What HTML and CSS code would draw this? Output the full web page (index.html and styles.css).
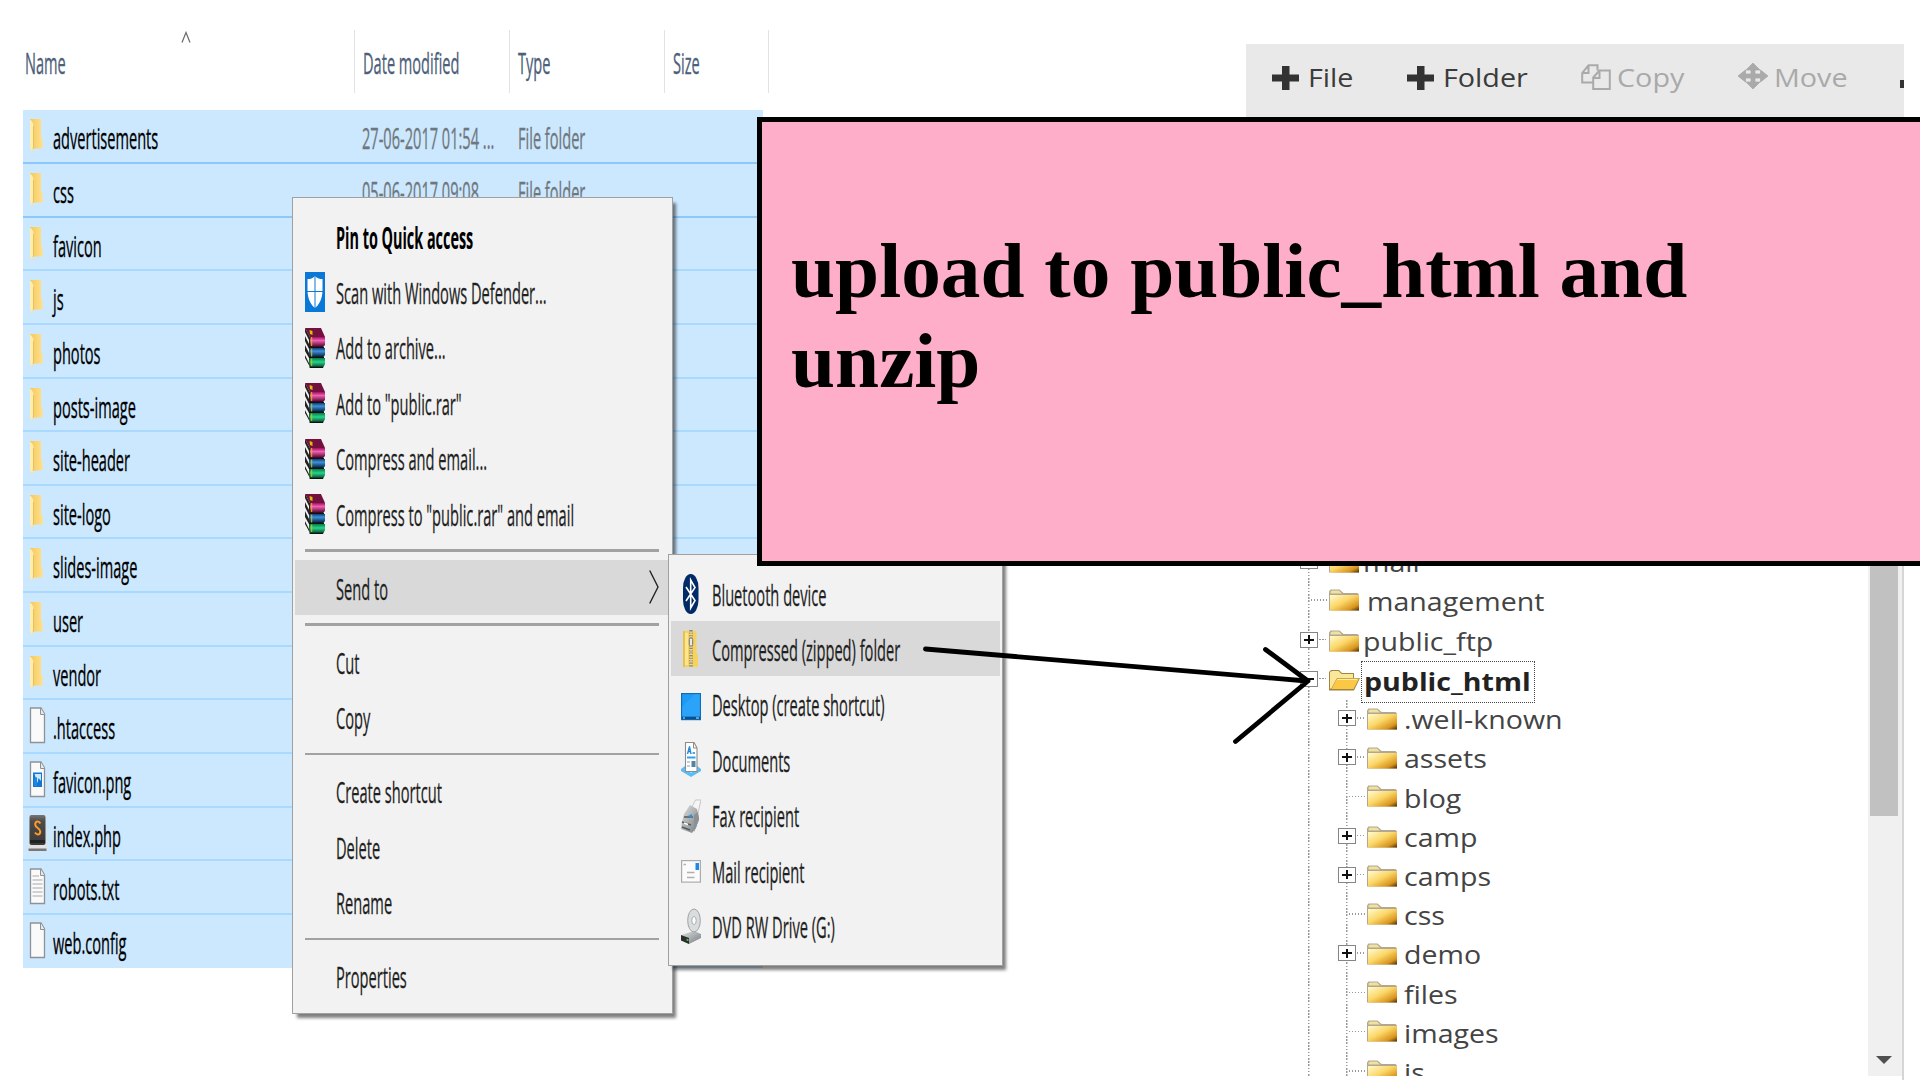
FILE: index.html
```html
<!DOCTYPE html>
<html lang="en">
<head>
<meta charset="utf-8">
<title>Upload to public_html</title>
<link rel="stylesheet" href="styles.css">
</head>
<body>
<svg class="defs" width="0" height="0" aria-hidden="true">
  <defs>
    <linearGradient id="gFold" x1="0" y1="0" x2="1" y2="0"><stop offset="0" stop-color="#f3c95f"/><stop offset="1" stop-color="#ffe08a"/></linearGradient>
    <linearGradient id="gTree" x1="0" y1="0" x2="1" y2="1"><stop offset="0" stop-color="#fffbd0"/><stop offset=".45" stop-color="#fbd768"/><stop offset=".8" stop-color="#d9941c"/><stop offset="1" stop-color="#4a2c00"/></linearGradient>
    <linearGradient id="gRed" x1="0" y1="0" x2="0" y2="1"><stop offset="0" stop-color="#a0105f"/><stop offset=".35" stop-color="#f05fb4"/><stop offset="1" stop-color="#4a0022"/></linearGradient>
    <linearGradient id="gBlue" x1="0" y1="0" x2="0" y2="1"><stop offset="0" stop-color="#0d3f78"/><stop offset=".35" stop-color="#3c92dc"/><stop offset="1" stop-color="#031c38"/></linearGradient>
    <linearGradient id="gGreen" x1="0" y1="0" x2="0" y2="1"><stop offset="0" stop-color="#067a46"/><stop offset=".4" stop-color="#25d68c"/><stop offset="1" stop-color="#02321c"/></linearGradient>
    <linearGradient id="gKey" x1="0" y1="0" x2="0" y2="1"><stop offset="0" stop-color="#777"/><stop offset=".2" stop-color="#4c4c4c"/><stop offset="1" stop-color="#3a3a3a"/></linearGradient>
    <linearGradient id="gMetal" x1="0" y1="0" x2="1" y2="1"><stop offset="0" stop-color="#dfe2e4"/><stop offset="1" stop-color="#767c80"/></linearGradient>
  </defs>
  <symbol id="folder" viewBox="0 0 20 40">
    <path d="M2 3H13V22L14.500 23V32.500H5V36L2 32Z" fill="url(#gFold)"/>
    <path d="M2 3.500C4 5 5.500 7 5.500 10V31L4.200 36L2 32Z" fill="#ffedb0"/>
    <path d="M5.500 10V31L5 33" fill="none" stroke="#e9b84a" stroke-width=".8"/>
  </symbol>
  <symbol id="page" viewBox="0 0 20 40">
    <path d="M2.500 2H13L16.500 8V36.500H2.500Z" fill="#fafafa" stroke="#8e9296" stroke-width="1.300"/>
    <path d="M12.500 2V8.500H16.500" fill="#e8e8e8" stroke="#8e9296"/>
  </symbol>
  <symbol id="image" viewBox="0 0 20 40">
    <use href="#page"/>
    <path d="M5 12.500H14V27H5Z" fill="#0f78d4"/><path d="M6.500 14H13V21L10.500 18L9.500 23Z" fill="#e6f3ff" opacity=".9"/><path d="M6 19L9 17V26H6Z" fill="#1b87e0"/>
  </symbol>
  <symbol id="text" viewBox="0 0 20 40">
    <use href="#page"/><path d="M4.500 9H11M4.500 13H14.500M4.500 17H14.500M4.500 21H14.500M4.500 25H14.500M4.500 29H14.500" stroke="#a8a8a8" stroke-width="1.200"/>
  </symbol>
  <symbol id="sublime" viewBox="0 0 20 40">
    <path d="M1 4L0 34Q0 37.500 1.500 37.500H17.500Q19 37.500 19 34L18 4Z" fill="#e2e2e2"/>
    <path d="M.5 34.500H18.500V37H.5Z" fill="#777"/>
    <rect x="1.500" y="1" width="16" height="30" rx="2" fill="url(#gKey)"/>
    <path d="M2 26H17V29H2Z" fill="#222"/>
    <path d="M12.300 9.500C11 6.500 7.200 7 7.200 10.500S12.300 14 12.300 17.500S9 21.500 7 18.500" fill="none" stroke="#ff9a28" stroke-width="2"/>
  </symbol>
  <symbol id="defender" viewBox="0 0 20 40">
    <rect width="20" height="40" fill="#0a78d7"/>
    <path d="M10 4C12 6.500 15 7 17.500 7V18C17.500 27 14 33 10 36C6 33 2.500 27 2.500 18V7C5 7 8 6.500 10 4Z" fill="#fff"/>
    <path d="M10 3V36M2 19.500H18" stroke="#0a78d7" stroke-width="1"/>
  </symbol>
  <symbol id="rar" viewBox="0 0 20 40">
    <path d="M0 0L5 9V39L0 30Z" fill="#222"/>
    <path d="M0 4L4 12V16L0 8ZM0 13L4 21V25L0 17ZM0 23L4 30V35L0 27Z" fill="#f4f4f4"/>
    <path d="M0 0H16L20 9H5Z" fill="#74103f"/>
    <path d="M4.500 2L7.500 3V7L5 6Z" fill="#d8c400"/>
    <path d="M5 9H20V17L18 19H5Z" fill="url(#gRed)"/>
    <path d="M4.500 20H20V27L18.500 29H4.500Z" fill="url(#gBlue)"/>
    <path d="M4.500 30H20V36L18 40H4.500Z" fill="url(#gGreen)"/>
    <path d="M4 19.300H19M4 29.300H19M5 39.300H18" stroke="#111" stroke-width="1.300"/>
    <path d="M6.700 9V18M6.700 20.500V28.500M6.700 30.500V38" stroke="#d8c400" stroke-width="1"/>
  </symbol>
  <symbol id="bluetooth" viewBox="0 0 20 40">
    <rect x="2" y="0" width="15.500" height="40" rx="7.700" ry="14" fill="#012a66"/>
    <path d="M5 13L14 26.500L9.700 34V6L14 13.500L5 27" fill="none" stroke="#fff" stroke-width="1.600"/>
  </symbol>
  <symbol id="zip" viewBox="0 0 20 40">
    <path d="M2 2H15.500V24L17 26V38H2Z" fill="#f6d25e"/><path d="M2 2H4V38H2Z" fill="#e8c04c"/><path d="M4 4H7V36H4Z" fill="#ffe58c"/>
    <path d="M10 1V38" stroke="#8c8570" stroke-width="3.400" stroke-dasharray="1.500 1"/>
    <path d="M10 3V37" stroke="#ddd9cb" stroke-width="1.300" stroke-dasharray="2 1.500"/>
    <rect x="8.300" y="9" width="3.400" height="8" rx="1.500" fill="#e8e8e8" stroke="#777"/>
  </symbol>
  <symbol id="desktop" viewBox="0 0 20 40">
    <rect x=".6" y="8.600" width="18.800" height="26" fill="#1e9cf4" stroke="#0f6db8" stroke-width="1.200"/>
    <path d="M1 22L14 9H19V31H1Z" fill="#35aafb" opacity=".5"/><path d="M1 33H19" stroke="#084f8b" stroke-width="2.500"/><path d="M2 33H4M15 33H18" stroke="#cfeaff" stroke-width="1.200"/>
  </symbol>
  <symbol id="documents" viewBox="0 0 20 40">
    <path d="M0 29L4 26H16L20 29V31L10 37L0 31Z" fill="#5bbdf2"/><path d="M3 29H17L10 33Z" fill="#a9e0fb"/>
    <path d="M4.500 2.500H13L16 8V31.500H4.500Z" fill="#fff" stroke="#8c8c8c" stroke-width="1.100"/><path d="M12.500 2.500V8H16" fill="none" stroke="#8c8c8c"/>
    <path d="M6.500 14L8.500 6.500L10 14M7 11.500H9.500M11.500 13H14" fill="none" stroke="#1d87d8" stroke-width="1.300"/>
    <path d="M6 17.500H14.500" stroke="#2aa0ee" stroke-width="2"/><path d="M6 22H9M6 26H9" stroke="#999" stroke-width="1.200"/><path d="M10.500 21H14.500V27H10.500Z" fill="#4d87a8"/>
  </symbol>
  <symbol id="fax" viewBox="0 0 20 40">
    <path d="M11 11L14.500 4H20L17 17Z" fill="#f5f5f5" stroke="#bbb" stroke-width=".8"/>
    <path d="M3 18L9 9L16 13L18 22L15 32L11 37L0 33L1 26Z" fill="url(#gMetal)"/>
    <path d="M13 19L17 16L18 24L13 36Z" fill="#8a9094"/>
    <path d="M3 21H12M1 26L10 29M1 31L9 34" stroke="#555b5f" stroke-width="1.700"/><path d="M7 20L11 18V22Z" fill="#2c93e0"/><path d="M3 27L7 28.500" stroke="#fff" stroke-width="1.500"/>
  </symbol>
  <symbol id="mail" viewBox="0 0 20 40">
    <rect x=".6" y="9.600" width="18.800" height="21.500" fill="#fbfbfb" stroke="#a8acb0" stroke-width="1.200"/>
    <path d="M14.500 12H18V19H14.500Z" fill="#1e88e5"/><path d="M2.500 13.500H5M6 21.500H13.500M6 26.500H13.500" stroke="#b0b0b0" stroke-width="1.500"/>
  </symbol>
  <symbol id="dvd" viewBox="0 0 20 40">
    <path d="M0 29L13 25L20 28V32L8 38L0 34Z" fill="url(#gMetal)"/><path d="M0 29L8 32V38L0 34.500Z" fill="#2d2d2d"/><path d="M5.500 33.500L7.500 34.300" stroke="#3bd13b" stroke-width="1.800"/>
    <ellipse cx="13" cy="14.500" rx="6.300" ry="11.500" fill="#dadddd" stroke="#9fa3a5"/><ellipse cx="13" cy="14.500" rx="2.200" ry="4" fill="#fff" stroke="#aaa"/>
  </symbol>
  <symbol id="tfolder" viewBox="0 0 32 22">
    <path d="M1 6V2.500L2.500 .5H11.500L15.500 4H29.500L31 5.500V21.500H1Z" fill="#b3a88f"/>
    <path d="M2.500 2.500L4 1.500H11L14 4.500H2.500Z" fill="#efe2a0"/>
    <rect x="2" y="6" width="29" height="15.500" fill="url(#gTree)"/>
  </symbol>
  <symbol id="topen" viewBox="0 0 32 22">
    <path d="M1 21V3L3 1H11L14 4H26V9H32L26 21.500H1Z" fill="#a08440"/>
    <path d="M2 19V3L4 2H10.500L13.500 5H25V9H9L3 20Z" fill="#fae79a"/>
    <path d="M9 9.500H31L25.500 20H3.500Z" fill="#fbc846"/><path d="M9.500 10.500H29" stroke="#fff0a8"/>
  </symbol>
  <symbol id="plus" viewBox="0 0 27 24"><path d="M10 0H17.500V8.500H27V15.500H17.500V24H10V15.500H0V8.500H10Z" fill="#333"/></symbol>
</svg>

<main class="screen">
  <section class="explorer">
    <header class="cols">
      <div class="col name"><span class="tight">Name</span><svg class="sort" viewBox="0 0 10 12"><path d="M1 11.500L5 1.500L9 11.500" fill="none" stroke="#6a6a6a" stroke-width="1.200"/></svg></div>
      <div class="col"><span class="tight">Date modified</span></div>
      <div class="col"><span class="tight">Type</span></div>
      <div class="col size"><span class="tight">Size</span></div>
    </header>
    <ul class="files">
      <li class="strong"><svg><use href="#folder"/></svg><span class="tight fname">advertisements</span><span class="tight date">27-06-2017 01:54 ...</span><span class="tight kind">File folder</span></li>
      <li class="strong"><svg><use href="#folder"/></svg><span class="tight fname">css</span><span class="tight date">05-06-2017 09:08</span><span class="tight kind">File folder</span></li>
      <li><svg><use href="#folder"/></svg><span class="tight">favicon</span></li>
      <li><svg><use href="#folder"/></svg><span class="tight">js</span></li>
      <li><svg><use href="#folder"/></svg><span class="tight">photos</span></li>
      <li><svg><use href="#folder"/></svg><span class="tight">posts-image</span></li>
      <li><svg><use href="#folder"/></svg><span class="tight">site-header</span></li>
      <li><svg><use href="#folder"/></svg><span class="tight">site-logo</span></li>
      <li><svg><use href="#folder"/></svg><span class="tight">slides-image</span></li>
      <li><svg><use href="#folder"/></svg><span class="tight">user</span></li>
      <li><svg><use href="#folder"/></svg><span class="tight">vendor</span></li>
      <li><svg><use href="#page"/></svg><span class="tight">.htaccess</span></li>
      <li><svg><use href="#image"/></svg><span class="tight">favicon.png</span></li>
      <li><svg><use href="#sublime"/></svg><span class="tight">index.php</span></li>
      <li><svg><use href="#text"/></svg><span class="tight">robots.txt</span></li>
      <li><svg><use href="#page"/></svg><span class="tight">web.config</span></li>
    </ul>
  </section>

  <section class="manager">
    <nav class="toolbar">
      <span class="tool file"><svg class="pl"><use href="#plus"/></svg><b>File</b></span>
      <span class="tool fold"><svg class="pl"><use href="#plus"/></svg><b>Folder</b></span>
      <span class="tool copy off"><svg class="cp" viewBox="0 0 30 26"><path d="M12 18.500H1.200V9L7.500 1.200H16.500V6.500M7.500 1.200V9H1.200M12.200 25V13.500L18.500 6.500H28.800V25ZM18.500 6.500V14H12.200" fill="none" stroke="#aaa" stroke-width="2"/></svg><b>Copy</b></span>
      <span class="tool move off"><svg class="mv" viewBox="0 0 30 26"><path d="M15 0L22 7H17V11H22.500V7L30 13L22.500 19V15H17V19H22L15 26L8 19H13V15H7.500V19L0 13L7.500 7V11H13V7H8Z" fill="#aaa" stroke="#aaa" stroke-width=".8"/></svg><b>Move</b></span>
      <i class="cut"></i>
    </nav>
    <div class="pane">
      <ul class="tree">
        <li><i class="box"></i><svg><use href="#tfolder"/></svg><span>mail</span></li>
        <li class="leaf"><svg><use href="#tfolder"/></svg><span>management</span></li>
        <li><i class="box"></i><svg><use href="#tfolder"/></svg><span>public_ftp</span></li>
        <li><i class="box minus"></i><svg><use href="#topen"/></svg><strong class="focus"><span>public_html</span></strong></li>
        <li class="branch">
          <ul>
            <li><i class="box"></i><svg><use href="#tfolder"/></svg><span>.well-known</span></li>
            <li><i class="box"></i><svg><use href="#tfolder"/></svg><span>assets</span></li>
            <li class="leaf"><svg><use href="#tfolder"/></svg><span>blog</span></li>
            <li><i class="box"></i><svg><use href="#tfolder"/></svg><span>camp</span></li>
            <li><i class="box"></i><svg><use href="#tfolder"/></svg><span>camps</span></li>
            <li class="leaf"><svg><use href="#tfolder"/></svg><span>css</span></li>
            <li><i class="box"></i><svg><use href="#tfolder"/></svg><span>demo</span></li>
            <li class="leaf"><svg><use href="#tfolder"/></svg><span>files</span></li>
            <li class="leaf"><svg><use href="#tfolder"/></svg><span>images</span></li>
            <li class="leaf"><svg><use href="#tfolder"/></svg><span>js</span></li>
          </ul>
        </li>
      </ul>
      <div class="scroll"><div class="thumb"></div><svg class="down" viewBox="0 0 16 8"><path d="M0 0H16L8 8Z" fill="#505050"/></svg></div>
    </div>
  </section>

  <div class="menu main">
    <div class="item bold"><span>Pin to Quick access</span></div>
    <div class="item"><svg><use href="#defender"/></svg><span>Scan with Windows Defender...</span></div>
    <div class="item"><svg><use href="#rar"/></svg><span>Add to archive...</span></div>
    <div class="item"><svg><use href="#rar"/></svg><span>Add to "public.rar"</span></div>
    <div class="item"><svg><use href="#rar"/></svg><span>Compress and email...</span></div>
    <div class="item"><svg><use href="#rar"/></svg><span>Compress to "public.rar" and email</span></div>
    <hr>
    <div class="item hover"><span>Send to</span><svg class="chev" viewBox="0 0 10 34"><path d="M.7 .5L9 17L.7 33.500" fill="none" stroke="#222" stroke-width="1.400"/></svg></div>
    <hr>
    <div class="item"><span>Cut</span></div>
    <div class="item"><span>Copy</span></div>
    <hr>
    <div class="item"><span>Create shortcut</span></div>
    <div class="item"><span>Delete</span></div>
    <div class="item"><span>Rename</span></div>
    <hr>
    <div class="item"><span>Properties</span></div>
  </div>

  <div class="menu sub">
    <div class="item"><svg><use href="#bluetooth"/></svg><span>Bluetooth device</span></div>
    <div class="item hover"><svg><use href="#zip"/></svg><span>Compressed (zipped) folder</span></div>
    <div class="item"><svg><use href="#desktop"/></svg><span>Desktop (create shortcut)</span></div>
    <div class="item"><svg><use href="#documents"/></svg><span>Documents</span></div>
    <div class="item"><svg><use href="#fax"/></svg><span>Fax recipient</span></div>
    <div class="item"><svg><use href="#mail"/></svg><span>Mail recipient</span></div>
    <div class="item"><svg><use href="#dvd"/></svg><span>DVD RW Drive (G:)</span></div>
  </div>

  <div class="note"><p>upload to public_html and<br>unzip</p></div>

  <svg class="arrow" viewBox="0 0 1920 1080"><path d="M925.500 649L1307 681M1265.500 649.500L1308 681L1235.500 741.500" fill="none" stroke="#000" stroke-width="4.800" stroke-linecap="round" stroke-linejoin="round"/></svg>
</main>
</body>
</html>
```
FILE: styles.css
```css
* { box-sizing: border-box; }
body { margin: 0; background: #fff; font-family: "Open Sans", "Noto Sans", sans-serif; }
ul { list-style: none; margin: 0; padding: 0; }
.defs { position: absolute; }
.screen { position: relative; display: flex; justify-content: space-between; width: 1920px; height: 1080px; overflow: hidden; }

/* file explorer */
.explorer { width: 769px; padding-top: 30px; font-size: 30px; }
.tight { display: block; white-space: nowrap; transform: scaleX(.486); transform-origin: 0 50%; -webkit-text-stroke: .35px currentColor; }
.cols { display: flex; height: 63px; padding-left: 25px; color: #4c607a; line-height: 66px; }
.col { display: flex; width: 155px; padding-left: 7.500px; border-left: 1px solid #e2e2e2; }
.col .tight { width: 90px; }
.col.name { position: relative; width: 329px; padding-left: 0; border: 0; }
.col.size { width: 105px; border-right: 1px solid #e2e2e2; }
.sort { position: absolute; left: 156px; top: 1px; width: 10px; height: 12px; }
.files { width: 740px; margin: 17.400px 0 0 23px; color: #000; }
.files li { display: flex; height: 53.630px; line-height: 55px; padding-left: 5px; background: #cce8ff; border-bottom: 2px solid #a9d9ff; }
.files li.strong { border-bottom-color: #8cc8fc; }
.files li:last-child { border: 0; }
.files svg { flex: none; width: 20px; height: 40px; margin: 6px 5px 0 0; }
.files .fname { width: 309px; }
.files .date { width: 155.500px; }
.date, .kind { color: #6f777d; }

/* web file manager */
.manager { width: 658px; margin-right: 16px; padding-top: 44px; }
.toolbar { display: flex; position: relative; height: 86px; background: #e9e9e9; padding-left: 26px; overflow: hidden; font-size: 26px; line-height: 67px; color: #3b3b3b; }
.tool { display: flex; flex: none; }
.tool b { display: block; font-weight: 400; transform: scaleX(1.105); transform-origin: 0 50%; }
.tool svg { flex: none; }
.file { width: 134.500px; }
.fold { width: 174.500px; }
.copy { width: 157px; }
.move { width: 162px; }
.off { color: #a9a9a9; }
.pl { width: 27px; height: 24px; margin: 22px 9px 0 0; }
.cp { width: 30px; height: 26px; margin: 20px 6px 0 0; }
.mv { width: 30px; height: 26px; margin: 19px 6px 0 0; }
.cut { flex: none; width: 6px; height: 8px; margin-top: 36px; background: #333; }
.pane { display: flex; justify-content: space-between; height: 950px; border-right: 2px solid #d6d6d6; }
.tree { height: 945.500px; overflow: hidden; width: 560px; padding: 413.200px 0 0 54px; font-size: 25px; line-height: 39.800px; color: #444; }
.tree { background: repeating-linear-gradient(#999 0 1.600px, #fff 1.600px 3.200px) 62px 0 / 1.500px 100% no-repeat; }
.tree li { display: flex; height: 39.230px; }
.tree li.branch { height: auto; margin-left: 38px; }
.branch ul { background: repeating-linear-gradient(#999 0 1.600px, #fff 1.600px 3.200px) 8px 0 / 1.500px 100% no-repeat; }
.tree svg { flex: none; width: 32px; height: 22px; margin: 8px 2.500px 0 0; }
.tree span { display: block; white-space: nowrap; transform: scaleX(1.142); transform-origin: 0 50%; }
.leaf::before { content: ""; width: 17px; height: 1.500px; margin: 17px 0 0 11px; background: repeating-linear-gradient(90deg, #999 0 1.500px, #fff 1.500px 3px); }
.tree .leaf svg { margin: 6.500px 6.500px 0 0; }
.tree .branch svg { margin-right: 6.300px; }
.box { position: relative; flex: none; width: 18px; height: 16px; margin: 10px 10px 0 0; border: 1.500px solid #858585;
  background: linear-gradient(#111, #111) 50% 50% / 10px 2px no-repeat, linear-gradient(#111, #111) 50% 50% / 2px 9px no-repeat, #fff; }
.box.minus { background: linear-gradient(#111, #111) 50% 50% / 10px 2px no-repeat, #fff; }
.box::after { content: ""; position: absolute; left: 18px; top: 6px; width: 8px; height: 1.500px; background: repeating-linear-gradient(90deg, #999 0 1.500px, #fff 1.500px 3px); }
.focus { width: 174px; height: 42px; margin: 0 0 0 -2px; padding-left: 2px; border: 1.500px dotted #444; color: #222; }
.scroll { display: flex; flex-direction: column; justify-content: space-between; align-items: center; width: 34px; height: 945.500px; background: #f0f0f0; padding: 0 2px 12px 0; }
.thumb { width: 28px; height: 686px; background: #c1c1c1; }
.down { width: 16px; height: 8px; }

/* context menus */
.menu { position: absolute; background: #f2f2f2; border: 1.500px solid #a0a0a0; box-shadow: 4px 5px 3px -1px rgba(0,0,0,.5); font-size: 29.500px; line-height: 58px; color: #1f1f1f; padding: 10.500px 2px 0; }
.menu.main { left: 292px; top: 197px; width: 381px; height: 817px; }
.menu.sub { left: 667.500px; top: 554px; width: 335px; height: 412px; }
.item { display: flex; position: relative; height: 55.450px; padding-left: 10px; }
.item svg { flex: none; width: 20px; height: 40px; margin: 8.300px 11px 0 0; }
.item span { display: block; white-space: nowrap; width: 200px; transform: scaleX(.496); transform-origin: 0 50%; -webkit-text-stroke: .3px currentColor; }
.item span:first-child { margin-left: 31px; }
.menu .hover { background: #d9d9d9; }
.bold { font-weight: 700; color: #000; }
.item.bold span { transform: scaleX(.488); -webkit-text-stroke: 0; }
.item .chev { width: 10px; height: 34px; margin: 10.500px 11px 0 auto; }
hr { height: 2.500px; margin: 8px 11px 8.100px 10px; border: 0; background: #a2a2a2; }

/* instruction note */
.note { position: absolute; left: 757px; top: 117px; width: 1180px; height: 449px; border: 5px solid #000; background: #ffaec9; padding: 104px 0 0 29px; }
.note p { margin: 0; width: 1000px; font: bold 78px/90px "Liberation Serif", "Times New Roman", serif; color: #000; transform: scaleX(1.016); transform-origin: 0 0; }
.arrow { position: absolute; left: 0; top: 0; width: 1920px; height: 1080px; }
```
